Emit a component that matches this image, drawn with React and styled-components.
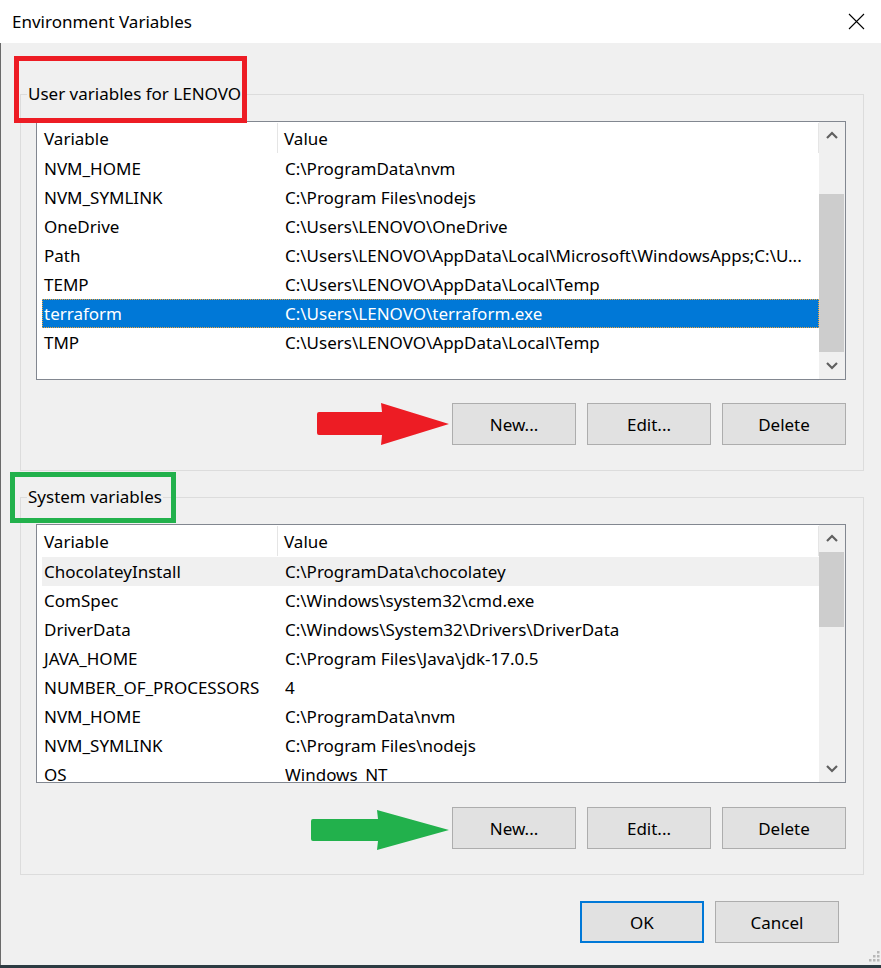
import React from "react";
import styled, { createGlobalStyle, css } from "styled-components";

const Global = createGlobalStyle`
  html, body { margin: 0; padding: 0; background: #f0f0f0; }
  *, *::before, *::after { box-sizing: border-box; }
`;

const FONT = `"Noto Sans", "Open Sans", sans-serif`;
const FS = "17px";

const Window = styled.div`
  position: relative;
  width: 881px;
  height: 968px;
  display: flex;
  flex-direction: column;
  font-family: ${FONT};
  font-size: ${FS};
  color: #000;
  overflow: hidden;
`;

const TitleBar = styled.div`
  height: 43px;
  flex: none;
  background: #fff;
  display: flex;
  align-items: center;
  justify-content: space-between;
  padding: 0 16px 0 12px;
`;

const Title = styled.div`
  font-size: ${FS};
  line-height: 20px;
`;

const Body = styled.div`
  flex: 1;
  background: #f0f0f0;
  border-left: 1px solid #6a6a6a;
  padding: 41px 17px 0 19px;
  display: flex;
  flex-direction: column;
`;

const BottomStrip = styled.div`
  height: 3px;
  flex: none;
  background: #2c3b42;
`;

const Group = styled.fieldset`
  margin: ${(p) => (p.$first ? "0" : "16px")} 0 0 0;
  padding: 17px 17px ${(p) => p.$pb}px 15px;
  border: 1px solid #dcdcdc;
  min-width: 0;
`;

const Legend = styled.legend`
  position: relative;
  margin-left: -9px;
  padding: 0 1px;
  line-height: 20px;
  font-size: ${FS};
  &::after {
    content: "";
    position: absolute;
    left: ${(p) => p.$mark.left}px;
    top: ${(p) => p.$mark.top}px;
    width: ${(p) => p.$mark.width}px;
    height: ${(p) => p.$mark.height}px;
    border: 5px solid ${(p) => p.$mark.color};
  }
`;

const ListBox = styled.div`
  height: 259px;
  border: 1px solid #828790;
  background: #fff;
  display: flex;
  overflow: hidden;
`;

const ListContent = styled.div`
  flex: 1;
  min-width: 0;
  padding-left: 5px;
  overflow: hidden;
`;

const HeaderRow = styled.div`
  display: grid;
  grid-template-columns: 236px 1fr;
  height: 32px;
`;

const HeaderCell = styled.div`
  display: flex;
  align-items: center;
  border-right: 1px solid #e5e5e5;
  margin: 1px 0;
  padding-left: ${(p) => (p.$first ? "2px" : "6px")};
`;

const Row = styled.div`
  display: grid;
  grid-template-columns: 243px 1fr;
  height: 29px;
  align-items: center;
  white-space: nowrap;
  ${(p) =>
    p.$selected &&
    css`
      background: #0078d7;
      color: #fff;
      outline: 1px dotted #f3a53a;
      outline-offset: -1px;
    `}
  ${(p) =>
    p.$dim &&
    css`
      background: #f0f0f0;
    `}
`;

const Cell = styled.div`
  padding-left: ${(p) => (p.$first ? "2px" : "0")};
  overflow: hidden;
  text-overflow: clip;
`;

const ScrollBar = styled.div`
  width: 26px;
  flex: none;
  background: #f0f0f0;
  display: flex;
  flex-direction: column;
`;

const ScrollArrow = styled.div`
  height: 26px;
  flex: none;
  display: flex;
  align-items: center;
  justify-content: center;
`;

const Track = styled.div`
  flex: 1;
`;

const Thumb = styled.div`
  background: #cdcdcd;
  width: 25px;
`;

const ButtonRow = styled.div`
  display: flex;
  justify-content: flex-end;
  align-items: flex-start;
  gap: 3px;
  margin-top: ${(p) => p.$mt}px;
`;

const ButtonGroup = styled.div`
  display: flex;
  gap: 11px;
`;

const Button = styled.button`
  width: 124px;
  height: 42px;
  margin: 0;
  padding: 0;
  font-family: ${FONT};
  font-size: ${FS};
  color: #000;
  background: #e1e1e1;
  border: ${(p) => (p.$default ? "2px solid #0078d7" : "1px solid #adadad")};
  border-radius: 0;
`;

const Footer = styled.div`
  display: flex;
  justify-content: flex-end;
  gap: 11px;
  margin-top: 26px;
  padding-right: 25px;
`;

const ArrowSvg = styled.svg`
  flex: none;
  display: block;
  margin-top: ${(p) => p.$shift}px;
`;

const Grip = styled.svg`
  position: absolute;
  right: 1px;
  bottom: 6px;
`;

const Chevron = ({ up }) => (
  <svg width="12" height="8" viewBox="0 0 12 8">
    <polyline
      points={up ? "1,7 6,2 11,7" : "1,1 6,6 11,1"}
      fill="none"
      stroke="#606060"
      strokeWidth="2.2"
    />
  </svg>
);

const List = ({ rows, selected, dim, thumb }) => (
  <ListBox>
    <ListContent>
      <HeaderRow>
        <HeaderCell $first>Variable</HeaderCell>
        <HeaderCell>Value</HeaderCell>
      </HeaderRow>
      {rows.map(([k, v], i) => (
        <Row key={k + i} $selected={i === selected} $dim={i === dim}>
          <Cell $first>{k}</Cell>
          <Cell>{v}</Cell>
        </Row>
      ))}
    </ListContent>
    <ScrollBar>
      <ScrollArrow>
        <Chevron up />
      </ScrollArrow>
      <Track>
        <Thumb style={{ marginTop: thumb.top, height: thumb.height }} />
      </Track>
      <ScrollArrow>
        <Chevron />
      </ScrollArrow>
    </ScrollBar>
  </ListBox>
);

const Arrow = ({ color, w, h, shaftTop, shaftBottom, headX, shift }) => (
  <ArrowSvg width={w} height={h} viewBox={`0 0 ${w} ${h}`} $shift={shift}>
    <path
      d={`M0,${shaftTop + 2} Q0,${shaftTop} 2,${shaftTop} L${headX + 1},${shaftTop} L${headX},0 L${w},${h / 2} L${headX},${h} L${headX + 1},${shaftBottom} L2,${shaftBottom} Q0,${shaftBottom} 0,${shaftBottom - 2} Z`}
      fill={color}
    />
  </ArrowSvg>
);

const userRows = [
  ["NVM_HOME", "C:\\ProgramData\\nvm"],
  ["NVM_SYMLINK", "C:\\Program Files\\nodejs"],
  ["OneDrive", "C:\\Users\\LENOVO\\OneDrive"],
  ["Path", "C:\\Users\\LENOVO\\AppData\\Local\\Microsoft\\WindowsApps;C:\\U..."],
  ["TEMP", "C:\\Users\\LENOVO\\AppData\\Local\\Temp"],
  ["terraform", "C:\\Users\\LENOVO\\terraform.exe"],
  ["TMP", "C:\\Users\\LENOVO\\AppData\\Local\\Temp"],
];

const systemRows = [
  ["ChocolateyInstall", "C:\\ProgramData\\chocolatey"],
  ["ComSpec", "C:\\Windows\\system32\\cmd.exe"],
  ["DriverData", "C:\\Windows\\System32\\Drivers\\DriverData"],
  ["JAVA_HOME", "C:\\Program Files\\Java\\jdk-17.0.5"],
  ["NUMBER_OF_PROCESSORS", "4"],
  ["NVM_HOME", "C:\\ProgramData\\nvm"],
  ["NVM_SYMLINK", "C:\\Program Files\\nodejs"],
  ["OS", "Windows_NT"],
];

const Buttons = () => (
  <ButtonGroup>
    <Button>New...</Button>
    <Button>Edit...</Button>
    <Button>Delete</Button>
  </ButtonGroup>
);

export default function App() {
  return (
    <>
      <Global />
      <Window>
        <TitleBar>
          <Title>Environment Variables</Title>
          <svg width="17" height="17" viewBox="0 0 17 17">
            <path d="M1,1 L16,16 M16,1 L1,16" stroke="#000" strokeWidth="1.1" />
          </svg>
        </TitleBar>
        <Body>
          <Group $first $pb={25}>
            <Legend $mark={{ left: -13, top: -28, width: 233, height: 67, color: "#ed1c24" }}>
              User variables for LENOVO
            </Legend>
            <List rows={userRows} selected={5} thumb={{ top: 46, height: 158 }} />
            <ButtonRow $mt={23}>
              <Arrow color="#ed1c24" w={132} h={42} shaftTop={9} shaftBottom={32} headX={64} shift={0} />
              <Buttons />
            </ButtonRow>
          </Group>
          <Group $pb={24}>
            <Legend $mark={{ left: -17, top: -15, width: 166, height: 51, color: "#22b14c" }}>
              System variables
            </Legend>
            <List rows={systemRows} dim={0} thumb={{ top: 1, height: 75 }} />
            <ButtonRow $mt={24}>
              <Arrow color="#22b14c" w={138} h={40} shaftTop={9} shaftBottom={31} headX={66} shift={3} />
              <Buttons />
            </ButtonRow>
          </Group>
          <Footer>
            <Button $default>OK</Button>
            <Button>Cancel</Button>
          </Footer>
        </Body>
        <BottomStrip />
        <Grip width="12" height="12" viewBox="0 0 12 12">
          {[
            [9, 1],
            [5, 5],
            [9, 5],
            [1, 9],
            [5, 9],
            [9, 9],
          ].map(([x, y]) => (
            <rect key={x + "-" + y} x={x} y={y} width="2.5" height="2.5" fill="#b8b8b8" />
          ))}
        </Grip>
      </Window>
    </>
  );
}
